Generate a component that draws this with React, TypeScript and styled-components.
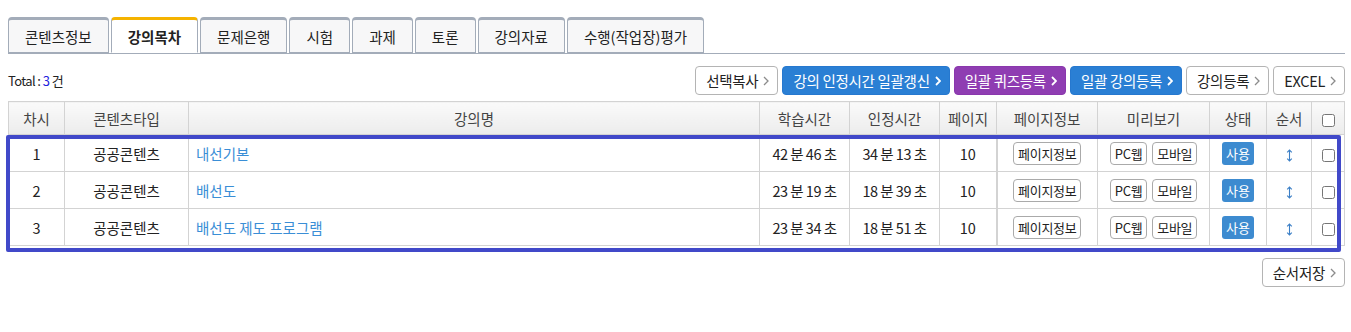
import { createGlobalStyle, styled } from "styled-components";

const GlobalStyle = createGlobalStyle`
  body {
    margin: 0;
    background: #fff;
    font-family: "Noto Sans CJK KR", "Noto Sans", sans-serif;
    color: #222;
  }
`;

const Page = styled.div`
  padding: 17px 6px 0 8px;
`;

const TabBar = styled.ul`
  display: flex;
  column-gap: 2px;
  margin: 0;
  padding: 0;
  list-style: none;
  border-bottom: 1px solid #a3acb9;
  height: 36px;
`;

const Tab = styled.li<{ $active?: boolean }>`
  display: flex;
  align-items: center;
  justify-content: center;
  padding: 0 16px;
  height: 36px;
  box-sizing: border-box;
  margin-bottom: -1px;
  border: 1px solid #a3acb9;
  border-top: 3px solid ${(p) => (p.$active ? "#f5b300" : "#a3acb9")};
  border-bottom: 1px solid ${(p) => (p.$active ? "#fff" : "#a3acb9")};
  border-radius: 4px 4px 0 0;
  background: ${(p) => (p.$active ? "#fff" : "#f7f7f8")};
  font-size: 14.5px;
  font-weight: ${(p) => (p.$active ? 700 : 400)};
  color: #222;
`;

const Toolbar = styled.div`
  display: flex;
  justify-content: space-between;
  align-items: center;
  margin: 12px 0 6px 0;
  height: 29px;
`;

const Total = styled.div`
  font-size: 13px;
  letter-spacing: -0.6px;
  color: #222;

  b {
    font-weight: 400;
    color: #2222dd;
  }
`;

const ButtonGroup = styled.div`
  display: flex;
  column-gap: 4px;
`;

const ActionButton = styled.button<{ $tone?: "blue" | "purple" }>`
  display: flex;
  align-items: center;
  column-gap: 5px;
  height: 29px;
  padding: 0 8px 0 10px;
  box-sizing: border-box;
  border-radius: 4px;
  font-family: "Noto Sans CJK KR", sans-serif;
  font-size: 14.5px;
  letter-spacing: -0.3px;
  cursor: pointer;
  border: 1px solid
    ${(p) => (p.$tone === "blue" ? "#2678cf" : p.$tone === "purple" ? "#8a37ad" : "#b4b4b4")};
  background: ${(p) => (p.$tone === "blue" ? "#2a7fd4" : p.$tone === "purple" ? "#8f3db2" : "#fff")};
  color: ${(p) => (p.$tone ? "#fff" : "#222")};
`;

const TableWrap = styled.div`
  position: relative;
`;

const Table = styled.table`
  width: 100%;
  table-layout: fixed;
  border-collapse: collapse;
  font-size: 14.5px;

  th,
  td {
    border: 1px solid #d3d3d3;
    text-align: center;
    padding: 0;
  }

  th {
    height: 32px;
    font-weight: 400;
    color: #444;
    background: linear-gradient(#fafafa, #ececec);
  }

  td {
    height: 36px;
    color: #222;
  }
`;

const TimeCell = styled.td`
  letter-spacing: -0.5px;
`;

const TitleCell = styled.td`
  && {
    text-align: left;
    padding-left: 7px;
  }
`;

const TitleLink = styled.a`
  color: #3a8ed6;
  text-decoration: none;
`;

const InfoCell = styled.td`
  && {
    border-left: 2px solid #d3d3d3;
  }
`;

const SmallButton = styled.button`
  height: 23px;
  padding: 0 4px;
  border: 1px solid #aaa;
  border-radius: 4px;
  background: #fff;
  font-family: "Noto Sans CJK KR", sans-serif;
  font-size: 13px;
  letter-spacing: -0.3px;
  color: #222;
  vertical-align: middle;

  & + & {
    margin-left: 5px;
  }
`;

const Badge = styled.span`
  display: inline-flex;
  align-items: center;
  justify-content: center;
  width: 32px;
  height: 23px;
  border-radius: 3px;
  background: #3d8bd0;
  color: #fff;
  font-size: 13px;
  vertical-align: middle;
`;

const Check = styled.input`
  margin: 0;
  width: 13px;
  height: 13px;
  vertical-align: middle;
`;

const Highlight = styled.div`
  position: absolute;
  left: -2px;
  top: 34px;
  width: 1335px;
  height: 117px;
  box-sizing: border-box;
  border: 4px solid #4149c9;
  border-radius: 2px;
  pointer-events: none;
`;

const Footer = styled.div`
  display: flex;
  justify-content: flex-end;
  margin-top: 12px;
`;

function Chevron({ light }: { light?: boolean }) {
  return (
    <svg width="6" height="10" viewBox="0 0 6 10">
      <polyline
        points="1,1 5,5 1,9"
        fill="none"
        stroke={light ? "#fff" : "#8c8c8c"}
        strokeWidth={light ? 1.8 : 1.3}
      />
    </svg>
  );
}

function SortIcon() {
  return (
    <svg width="7" height="13" viewBox="0 0 7 13" style={{ verticalAlign: "middle" }}>
      <path d="M3.5 1v11M1.2 3.3l2.3-2.3 2.3 2.3M1.2 9.7l2.3 2.3 2.3-2.3" fill="none" stroke="#3b7fc6" strokeWidth="1.1" />
    </svg>
  );
}

const tabs = ["콘텐츠정보", "강의목차", "문제은행", "시험", "과제", "토론", "강의자료", "수행(작업장)평가"];

const rows = [
  { no: 1, title: "내선기본", study: "42 분 46 초", credit: "34 분 13 초" },
  { no: 2, title: "배선도", study: "23 분 19 초", credit: "18 분 39 초" },
  { no: 3, title: "배선도 제도 프로그램", study: "23 분 34 초", credit: "18 분 51 초" },
];

export default function App() {
  return (
    <Page>
      <GlobalStyle />
      <TabBar>
        {tabs.map((t) => (
          <Tab key={t} $active={t === "강의목차"}>
            {t}
          </Tab>
        ))}
      </TabBar>

      <Toolbar>
        <Total>
          Total : <b>3</b> 건
        </Total>
        <ButtonGroup>
          <ActionButton>
            선택복사 <Chevron />
          </ActionButton>
          <ActionButton $tone="blue">
            강의 인정시간 일괄갱신 <Chevron light />
          </ActionButton>
          <ActionButton $tone="purple">
            일괄 퀴즈등록 <Chevron light />
          </ActionButton>
          <ActionButton $tone="blue">
            일괄 강의등록 <Chevron light />
          </ActionButton>
          <ActionButton>
            강의등록 <Chevron />
          </ActionButton>
          <ActionButton>
            EXCEL <Chevron />
          </ActionButton>
        </ButtonGroup>
      </Toolbar>

      <TableWrap>
        <Table>
          <colgroup>
            <col style={{ width: 56 }} />
            <col style={{ width: 124 }} />
            <col />
            <col style={{ width: 90 }} />
            <col style={{ width: 90 }} />
            <col style={{ width: 57 }} />
            <col style={{ width: 101 }} />
            <col style={{ width: 112 }} />
            <col style={{ width: 57 }} />
            <col style={{ width: 45 }} />
            <col style={{ width: 33 }} />
          </colgroup>
          <thead>
            <tr>
              <th>차시</th>
              <th>콘텐츠타입</th>
              <th>강의명</th>
              <th>학습시간</th>
              <th>인정시간</th>
              <th>페이지</th>
              <th>페이지정보</th>
              <th>미리보기</th>
              <th>상태</th>
              <th>순서</th>
              <th>
                <Check type="checkbox" />
              </th>
            </tr>
          </thead>
          <tbody>
            {rows.map((r) => (
              <tr key={r.no}>
                <td>{r.no}</td>
                <td>공공콘텐츠</td>
                <TitleCell>
                  <TitleLink href="#">{r.title}</TitleLink>
                </TitleCell>
                <TimeCell>{r.study}</TimeCell>
                <TimeCell>{r.credit}</TimeCell>
                <td>10</td>
                <InfoCell>
                  <SmallButton>페이지정보</SmallButton>
                </InfoCell>
                <td>
                  <SmallButton>PC웹</SmallButton>
                  <SmallButton>모바일</SmallButton>
                </td>
                <td>
                  <Badge>사용</Badge>
                </td>
                <td>
                  <SortIcon />
                </td>
                <td>
                  <Check type="checkbox" />
                </td>
              </tr>
            ))}
          </tbody>
        </Table>
        <Highlight />
      </TableWrap>

      <Footer>
        <ActionButton>
          순서저장 <Chevron />
        </ActionButton>
      </Footer>
    </Page>
  );
}
